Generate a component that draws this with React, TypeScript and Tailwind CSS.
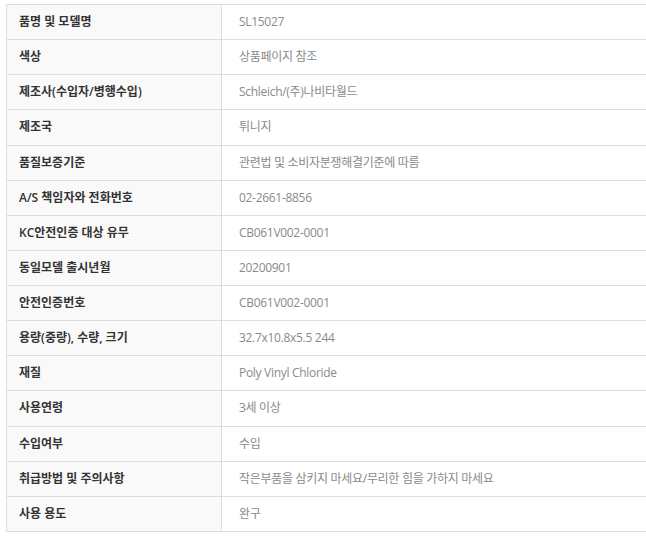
const rows: [string, string][] = [
  ["품명 및 모델명", "SL15027"],
  ["색상", "상품페이지 참조"],
  ["제조사(수입자/병행수입)", "Schleich/(주)나비타월드"],
  ["제조국", "튀니지"],
  ["품질보증기준", "관련법 및 소비자분쟁해결기준에 따름"],
  ["A/S 책임자와 전화번호", "02-2661-8856"],
  ["KC안전인증 대상 유무", "CB061V002-0001"],
  ["동일모델 출시년월", "20200901"],
  ["안전인증번호", "CB061V002-0001"],
  ["용량(중량), 수량, 크기", "32.7x10.8x5.5 244"],
  ["재질", "Poly Vinyl Chloride"],
  ["사용연령", "3세 이상"],
  ["수입여부", "수입"],
  ["취급방법 및 주의사항", "작은부품을 삼키지 마세요/무리한 힘을 가하지 마세요"],
  ["사용 용도", "완구"],
];

export default function App() {
  return (
    <div className="min-h-[538px] bg-white pt-[4px] pl-[6px] font-['Open_Sans','Noto_Sans_CJK_KR',sans-serif] text-[12px]">
      <div className="border-t border-l border-[#dddddd]">
        {rows.map(([label, value]) => (
          <div
            key={label}
            className="grid h-[35.13px] grid-cols-[215px_1fr] border-b border-[#dddddd]"
          >
            <div className="flex items-center border-r border-[#dddddd] bg-[#f9f9f9] pl-[12px] font-semibold text-[#333333]">
              {label}
            </div>
            <div className="flex items-center pl-[17px] tracking-[-0.3px] text-[#8a8a8a]">{value}</div>
          </div>
        ))}
      </div>
    </div>
  );
}
